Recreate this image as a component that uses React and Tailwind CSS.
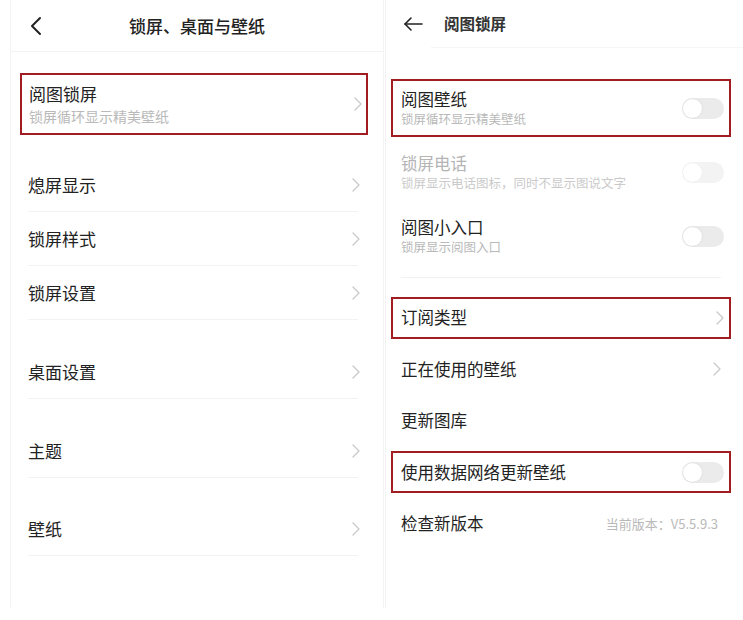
import React from 'react';

const FONT = { fontFamily: '"Noto Sans CJK SC", "Noto Sans", sans-serif' };

function Chevron({ className = '' }) {
  return (
    <svg width="8" height="14" viewBox="0 0 8 14" className={className}>
      <polyline points="1,1 7,7 1,13" fill="none" stroke="#c9c9c9" strokeWidth="1.3" strokeLinecap="round" strokeLinejoin="round" />
    </svg>
  );
}

function Toggle({ faded = false }) {
  return (
    <div className={`relative h-[21px] w-[42px] rounded-full ${faded ? 'bg-[#f3f3f3]' : 'bg-[#ebebeb]'}`}>
      <div className={`absolute left-[1px] top-[1px] h-[19px] w-[19px] rounded-full bg-white ${faded ? 'shadow-[0_0_1px_rgba(0,0,0,0.08)]' : 'shadow-[0_0_2px_rgba(0,0,0,0.12)]'}`} />
    </div>
  );
}

// left column list row, divider starts under the text
function LeftRow({ label, className = '' }) {
  return (
    <div className={className}>
      <div className="flex h-[53px] items-center justify-between pl-[17px] pr-[9px]">
        <span className="text-[17px] text-[#222]">{label}</span>
        <Chevron />
      </div>
      <div className="ml-[17px] mr-[11px] h-px bg-[#f2f2f2]" />
    </div>
  );
}

function LeftPanel() {
  return (
    <div className="ml-[10px] flex h-[608px] w-[374px] flex-col border-l border-r border-[#f4f4f4]">
      <header className="relative flex h-[52px] shrink-0 items-center justify-center border-b border-[#f3f3f3]">
        <svg width="14" height="20" viewBox="0 0 14 20" className="absolute left-[18px] top-[16px]">
          <polyline points="11,2 3,10 11,18" fill="none" stroke="#222" strokeWidth="2" strokeLinecap="round" strokeLinejoin="round" />
        </svg>
        <h1 className="text-[17px] font-medium text-[#222]">锁屏、桌面与壁纸</h1>
      </header>

      <div className="mt-[21px] ml-[9px] mr-[15px] flex h-[62px] items-center justify-between border-[2px] border-[#a11d22] pl-[7px] pr-[4px]">
        <div className="flex flex-col">
          <span className="text-[17px] leading-[24px] text-[#222]">阅图锁屏</span>
          <span className="text-[14px] leading-[20px] text-[#b9b9b9]">锁屏循环显示精美壁纸</span>
        </div>
        <Chevron />
      </div>

      <div className="mt-[23px] mr-[14px]">
        <LeftRow label="熄屏显示" />
        <LeftRow label="锁屏样式" />
        <LeftRow label="锁屏设置" />
        <LeftRow label="桌面设置" className="mt-[25px]" />
        <LeftRow label="主题" className="mt-[25px]" />
        <LeftRow label="壁纸" className="mt-[24px]" />
      </div>
    </div>
  );
}

function SwitchRow({ title, sub, faded = false, boxed = false }) {
  return (
    <div className="flex h-[64px] items-center">
      <div className={`flex h-[58px] flex-1 items-center justify-between border-[2px] pl-[8px] pr-[5px] ${boxed ? 'border-[#a11d22]' : 'border-transparent'}`}>
        <div className="flex flex-col">
          <span className={`text-[16.5px] leading-[22px] ${faded ? 'text-[#b4b4b4]' : 'text-[#222]'}`}>{title}</span>
          <span className={`text-[12.5px] leading-[18px] ${faded ? 'text-[#cacaca]' : 'text-[#b9b9b9]'}`}>{sub}</span>
        </div>
        <Toggle faded={faded} />
      </div>
    </div>
  );
}

function PlainRow({ children, right, boxed = false }) {
  return (
    <div className="flex h-[51.5px] items-center">
      <div className={`flex h-[42px] flex-1 items-center justify-between border-[2px] pl-[8px] pr-[5px] ${boxed ? 'border-[#a11d22]' : 'border-transparent'}`}>
        <span className="text-[16.5px] text-[#222]">{children}</span>
        {right}
      </div>
    </div>
  );
}

function RightPanel() {
  return (
    <div className="ml-[1px] flex h-[608px] flex-1 flex-col border-l border-[#f2f2f2]">
      <header className="ml-[5px] flex h-[47px] shrink-0 items-center">
        <svg width="20" height="14" viewBox="0 0 20 14" className="ml-[12px]">
          <line x1="2" y1="7" x2="19" y2="7" stroke="#222" strokeWidth="1.6" strokeLinecap="round" />
          <polyline points="8,1 2,7 8,13" fill="none" stroke="#222" strokeWidth="1.6" strokeLinecap="round" strokeLinejoin="round" />
        </svg>
        <h1 className="ml-[21px] text-[15.5px] font-bold text-[#333]">阅图锁屏</h1>
      </header>
      <div className="ml-[45px] h-px bg-[#f6f6f6]" />

      <div className="mt-[28px] ml-[5px] mr-[12px]">
        <SwitchRow title="阅图壁纸" sub="锁屏循环显示精美壁纸" boxed />
        <SwitchRow title="锁屏电话" sub="锁屏显示电话图标，同时不显示图说文字" faded />
        <SwitchRow title="阅图小入口" sub="锁屏显示阅图入口" />
        <div className="mt-[9px] mb-[14px] ml-[10px] mr-[10px] h-px bg-[#f1f1f1]" />
        <PlainRow boxed right={<Chevron />}>订阅类型</PlainRow>
        <PlainRow right={<Chevron className="mr-[3px]" />}>正在使用的壁纸</PlainRow>
        <PlainRow>更新图库</PlainRow>
        <PlainRow boxed right={<Toggle />}>使用数据网络更新壁纸</PlainRow>
        <PlainRow right={<span className="mr-[6px] text-[13px] text-[#b9b9b9]">当前版本：V5.5.9.3</span>}>检查新版本</PlainRow>
      </div>
    </div>
  );
}

export default function App() {
  return (
    <div className="flex h-[620px] w-[743px] bg-white" style={FONT}>
      <LeftPanel />
      <RightPanel />
    </div>
  );
}
